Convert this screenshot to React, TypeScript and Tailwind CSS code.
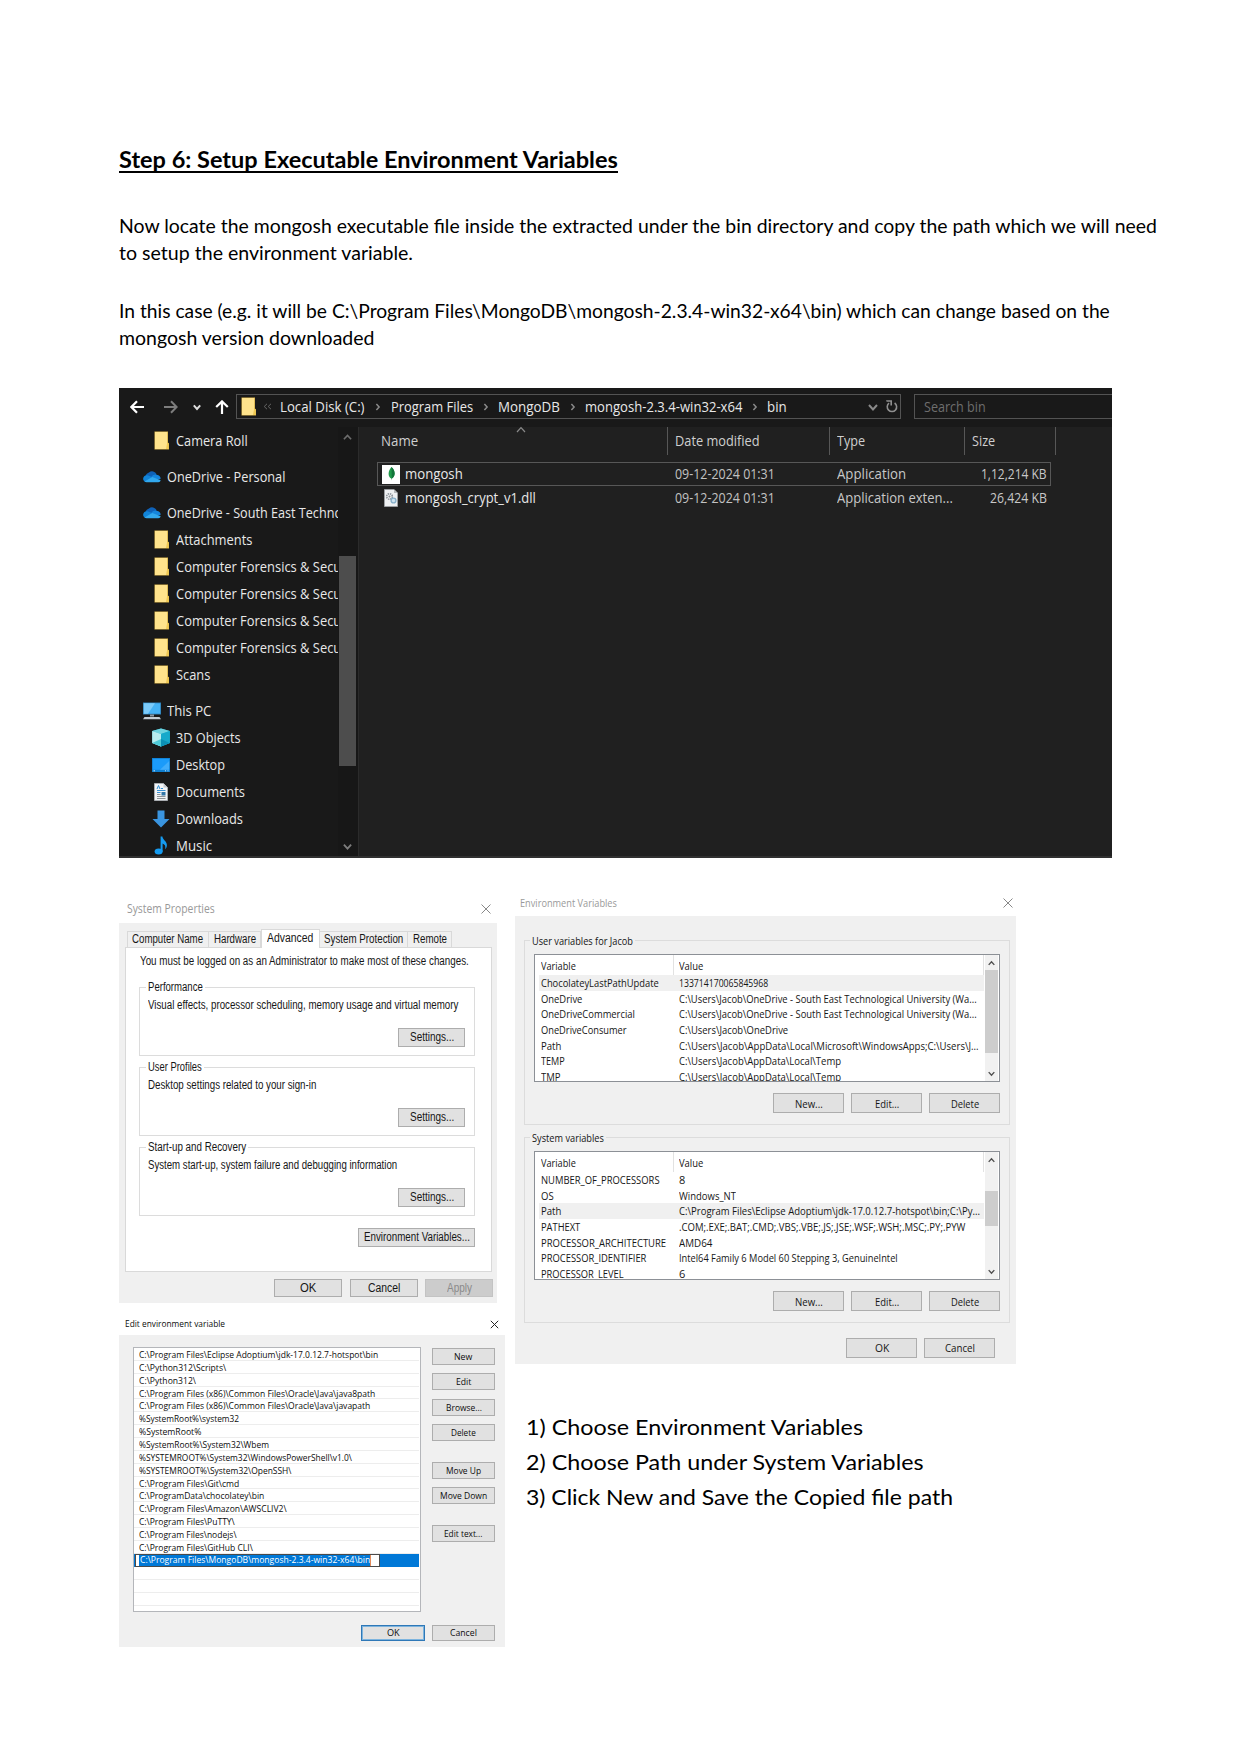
import { useLayoutEffect, useRef, useState, type ReactNode } from "react";

/** Single line of text, condensed or expanded horizontally to a given measure. */
function T({ w, children, className = "" }: { w: number; children: string; className?: string }) {
  const ref = useRef<HTMLSpanElement>(null);
  const [scale, setScale] = useState(1);
  useLayoutEffect(() => {
    if (ref.current) setScale(w / ref.current.offsetWidth);
  }, [w, children]);
  return (
    <span className={"inline-flex shrink-0 " + className} style={{ width: w }}>
      <span ref={ref} className="inline-block origin-left whitespace-pre" style={{ transform: `scaleX(${scale})` }}>
        {children}
      </span>
    </span>
  );
}

/* ---------- icons ---------- */

function Folder() {
  return (
    <svg width="15" height="19" viewBox="0 0 15 19" className="shrink-0">
      <path d="M0.5 0.5H14V11.5L15 12.5V18.5H0.5Z" fill="#d9b44a" />
      <path d="M1 1H13.2V18H1Z" fill="#ffe38c" />
      <path d="M13.2 11.5L14.8 12.5V18H12Z" fill="#f0c954" />
    </svg>
  );
}

function Cloud() {
  return (
    <svg width="18" height="13" viewBox="0 0 18 13" className="shrink-0">
      <path d="M3 8A4.6 4.6 0 0 1 6 2.4A5 5 0 0 1 13.6 4.2L10 9Z" fill="#0f62b8" />
      <path d="M0.2 9.5A3.7 3.7 0 0 1 4.4 5.2L10.5 7.5L3 12A3 3 0 0 1 0.2 9.5Z" fill="#1184d8" />
      <path d="M8.5 6.8C10 4.4 12.5 3.8 14.6 5A4 4 0 0 1 17.6 9L12 10Z" fill="#1585dc" />
      <path d="M1.5 11.4L9.3 7L17.7 10.3A2.6 2.6 0 0 1 15.3 12.3H3.6A4 4 0 0 1 1.5 11.4Z" fill="#32a9ee" />
    </svg>
  );
}

function Monitor() {
  return (
    <svg width="18" height="18" viewBox="0 0 18 18" className="shrink-0">
      <path d="M0 0.5H18V12.5H0Z" fill="#2f7fb5" />
      <path d="M0.8 1.3H17.2V11.7H0.8Z" fill="#45b2f5" />
      <path d="M0.8 1.3H12L5 11.7H0.8Z" fill="#7ccbfa" />
      <path d="M7 12.5H11V14.5H7Z" fill="#8e9aa5" />
      <path d="M1.5 15H16.5L18 17.2H0Z" fill="#c3ccd4" />
    </svg>
  );
}

function Cube() {
  return (
    <svg width="18" height="19" viewBox="0 0 18 19" className="shrink-0">
      <path d="M9 0.5L17.8 3V15L9 18.5L0.2 15V3Z" fill="#1fb6cf" />
      <path d="M9 0.5L17.8 3L9 6L0.2 3Z" fill="#6fd3df" />
      <path d="M0.2 3L9 6V18.5L0.2 15Z" fill="#b9edf0" />
      <path d="M0.2 15L9 11V18.5Z" fill="#4fcbd8" />
      <path d="M9 6L17.8 3V15L9 18.5Z" fill="#17a9cb" />
      <path d="M9 11L17.8 15L9 18.5Z" fill="#0c91b5" />
    </svg>
  );
}

function DesktopIcon() {
  return (
    <svg width="18" height="14" viewBox="0 0 18 14" className="shrink-0">
      <path d="M0 0H18V14H0Z" fill="#0f7fd0" />
      <path d="M0.8 0.8H17.2V11.8H0.8Z" fill="#1b9bfa" />
      <path d="M17.2 3V11.8H8Z" fill="#41adfb" />
      <path d="M1.5 12.8H3M13 12.8H14M15.5 12.8H16.5" stroke="#d6ecff" strokeWidth="0.9" />
    </svg>
  );
}

function DocIcon() {
  return (
    <svg width="14" height="18" viewBox="0 0 14 18" className="shrink-0">
      <path d="M0.5 0.5H9.5L13.5 4.5V17.5H0.5Z" fill="#f2f4f6" stroke="#a9adb1" />
      <path d="M9.5 0.5V4.5H13.5Z" fill="#c4c8cc" />
      <path d="M3 6L4.5 2.5L6 6M7 5.5H9" stroke="#2f8fd6" fill="none" />
      <path d="M3 7.5H11.5M3 9.5H6.5" stroke="#3a92d4" />
      <path d="M7.5 9H11.5V12.5H7.5Z" fill="#3277a8" />
      <path d="M3 11.5H6.5M3 13.5H11.5M3 15.5H11.5" stroke="#8d9499" />
    </svg>
  );
}

function DownIcon() {
  return (
    <svg width="18" height="18" viewBox="0 0 18 18" className="shrink-0">
      <path d="M5.5 0.5H12.5V9H17.5L9 17.5L0.5 9H5.5Z" fill="#3a95e0" />
    </svg>
  );
}

function MusicIcon() {
  return (
    <svg width="14" height="19" viewBox="0 0 14 19" className="shrink-0">
      <ellipse cx="4.6" cy="15.6" rx="4" ry="3" fill="#159bf0" />
      <path d="M6.6 0.5H8.4C8.8 4 13 5.2 12.9 9.2C12.9 11 12 12.5 11 13.3C12 10 11 8.4 8.6 7.4V15.8H6.6Z" fill="#159bf0" />
    </svg>
  );
}

function MongoIcon() {
  return (
    <svg width="18" height="19" viewBox="0 0 18 19" className="shrink-0">
      <path d="M0 0H18V19H0Z" fill="#fff" />
      <path d="M9.4 2C11.6 4 12.6 6 12.6 8.6C12.6 11 11.4 12.6 9.8 13.6L9.5 15.5L9.2 13.6C7.4 12.6 6.6 11 6.6 8.8C6.6 6 8 4 9.4 2Z" fill="#1f9a4a" />
      <path d="M9.5 2C11.6 4 12.6 6 12.6 8.6C12.6 11 11.4 12.6 9.8 13.6Z" fill="#12753a" />
    </svg>
  );
}

function DllIcon() {
  return (
    <svg width="14" height="18" viewBox="0 0 14 18" className="shrink-0">
      <path d="M0.5 0.5H10L13.5 4V17.5H0.5Z" fill="#eef0f2" stroke="#9c9fa2" />
      <path d="M10 0.5V4H13.5Z" fill="#b5b9bc" />
      <circle cx="5.5" cy="7.5" r="2.8" fill="none" stroke="#8b9299" strokeWidth="1.6" strokeDasharray="1.4 0.8" />
      <circle cx="5.5" cy="7.5" r="1" fill="#8b9299" />
      <circle cx="9.5" cy="11.5" r="2.4" fill="#cfe3f0" stroke="#88b0ca" strokeWidth="1.4" />
    </svg>
  );
}

function Chevron({ d, size = 8, color, stroke = 1.5 }: { d: "r" | "d" | "u"; size?: number; color: string; stroke?: number }) {
  const path = { r: "M3 1.2L6.4 5L3 8.8", d: "M1 3L5 7.4L9 3", u: "M1 7L5 2.6L9 7" }[d];
  return (
    <svg width={size} height={size} viewBox="0 0 10 10" className="shrink-0" fill="none" stroke={color} strokeWidth={(stroke * 10) / size}>
      <path d={path} />
    </svg>
  );
}

function Close({ color }: { color: string }) {
  return (
    <svg width="10" height="10" viewBox="0 0 10 10" className="shrink-0" stroke={color} strokeWidth="1">
      <path d="M0.5 0.5L9.5 9.5M9.5 0.5L0.5 9.5" />
    </svg>
  );
}

/* ---------- file explorer ---------- */

const tree: { icon: ReactNode; label: string; w: number; top?: boolean; gap?: boolean }[] = [
  { icon: <Folder />, label: "Camera Roll", w: 72 },
  { icon: <Cloud />, label: "OneDrive - Personal", w: 118, top: true, gap: true },
  { icon: <Cloud />, label: "OneDrive - South East Techno", w: 175, top: true, gap: true },
  { icon: <Folder />, label: "Attachments", w: 76.5 },
  { icon: <Folder />, label: "Computer Forensics & Secu", w: 165 },
  { icon: <Folder />, label: "Computer Forensics & Secu", w: 165 },
  { icon: <Folder />, label: "Computer Forensics & Secu", w: 165 },
  { icon: <Folder />, label: "Computer Forensics & Secu", w: 165 },
  { icon: <Folder />, label: "Scans", w: 34 },
  { icon: <Monitor />, label: "This PC", w: 44, top: true, gap: true },
  { icon: <Cube />, label: "3D Objects", w: 64.5 },
  { icon: <DesktopIcon />, label: "Desktop", w: 49 },
  { icon: <DocIcon />, label: "Documents", w: 69 },
  { icon: <DownIcon />, label: "Downloads", w: 67 },
  { icon: <MusicIcon />, label: "Music", w: 36 },
];

function Explorer() {
  return (
    <section className="flex h-[470px] w-[993px] flex-col border-b-2 border-[#303030] bg-[#191919] font-['Open_Sans',sans-serif] text-[14px] leading-[20px] text-[#e8e8e8]">
      <div className="flex h-[39px] shrink-0 items-start pt-[6px]">
        <div className="flex h-[25px] w-[117px] items-center">
          <svg width="14" height="14" viewBox="0 0 14 14" className="ml-[11px]" fill="none" stroke="#fff" strokeWidth="2.2">
            <path d="M14 7H1.5M7 1.2L1.4 7L7 12.8" />
          </svg>
          <svg width="14" height="14" viewBox="0 0 14 14" className="ml-[20px]" fill="none" stroke="#7d7d7d" strokeWidth="2">
            <path d="M0 7H12.5M7 1.2L12.6 7L7 12.8" />
          </svg>
          <div className="ml-[15px]"><Chevron d="d" size={8} color="#ddd" stroke={2} /></div>
          <svg width="14" height="14" viewBox="0 0 14 14" className="ml-[14px]" fill="none" stroke="#fff" strokeWidth="2.2">
            <path d="M7 14V1.5M1.2 7L7 1.4L12.8 7" />
          </svg>
        </div>
        <div className="flex h-[25px] w-[665px] items-center border border-[#535353] pl-[4px]">
          <Folder />
          <div className="ml-[7px] flex w-[9px]">
            <svg width="9" height="7" viewBox="0 0 9 7" fill="none" stroke="#666" strokeWidth="1">
              <path d="M4 0.8L1.2 3.5L4 6.2M8 0.8L5.2 3.5L8 6.2" />
            </svg>
          </div>
          <T w={85} className="ml-[8px]">Local Disk (C:)</T>
          <div className="flex w-[26px] justify-center"><Chevron d="r" color="#8a8a8a" /></div>
          <T w={82}>Program Files</T>
          <div className="flex w-[25px] justify-center"><Chevron d="r" color="#8a8a8a" /></div>
          <T w={62}>MongoDB</T>
          <div className="flex w-[25px] justify-center"><Chevron d="r" color="#8a8a8a" /></div>
          <T w={157}>mongosh-2.3.4-win32-x64</T>
          <div className="flex w-[25px] justify-center"><Chevron d="r" color="#8a8a8a" /></div>
          <T w={20}>bin</T>
          <div className="ml-auto flex items-center pr-[2px]">
            <Chevron d="d" size={10} color="#8a8a8a" stroke={2} />
            <svg width="12" height="13" viewBox="0 0 12 13" className="ml-[8px]" fill="none" stroke="#8f8f8f" strokeWidth="1.6">
              <path d="M3 3.2A4.7 4.7 0 1 0 8.6 3M1 1.5V1H5.2V5.4" />
            </svg>
          </div>
        </div>
        <div className="ml-[13px] flex h-[25px] flex-1 items-center border border-r-0 border-[#535353] pl-[9px] text-[#6e6e6e]">
          <T w={62}>Search bin</T>
        </div>
      </div>

      <div className="flex min-h-0 flex-1">
        <nav className="flex w-[219px] flex-col overflow-hidden">
          {tree.map((n, i) => (
            <div key={i} className={"flex h-[27px] shrink-0 items-center " + (n.gap ? "mt-[9px] " : "") + (n.top ? "pl-[24px]" : "pl-[33px]")}>
              <span className="flex w-[18px] shrink-0 justify-center">{n.icon}</span>
              <T w={n.w} className="ml-[6px]">{n.label}</T>
            </div>
          ))}
        </nav>
        <div className="flex w-[21px] flex-col items-start border-r border-[#2b2b2b] bg-[#171717]">
          <div className="flex h-[129px] pl-[5px] pt-[6px]"><Chevron d="u" size={9} color="#6d6d6d" stroke={1.6} /></div>
          <div className="ml-px h-[210px] w-[17px] bg-[#4d4d4d]" />
          <div className="mt-auto pb-[5px] pl-[5px]"><Chevron d="d" size={9} color="#7d7d7d" stroke={1.8} /></div>
        </div>

        <div className="flex flex-1 flex-col bg-[#202020]">
          <div className="flex h-[28px] items-center text-[#cfcfcf]">
            <div className="relative flex h-full w-[309px] items-center border-r border-[#575757] pl-[22px]">
              <T w={37}>Name</T>
              <div className="absolute left-[157px] top-[-2px]"><Chevron d="u" size={10} color="#8a8a8a" stroke={1.2} /></div>
            </div>
            <div className="flex h-full w-[162px] items-center border-r border-[#575757] pl-[7px]"><T w={85}>Date modified</T></div>
            <div className="flex h-full w-[135px] items-center border-r border-[#575757] pl-[7px]"><T w={28}>Type</T></div>
            <div className="flex h-full w-[91px] items-center border-r border-[#575757] pl-[7px]"><T w={23.5}>Size</T></div>
          </div>
          <div className="ml-[18px] mt-[7px] flex h-[24px] w-[674px] items-center border border-[#575757]">
            <span className="ml-[4px] flex w-[18px] justify-center"><MongoIcon /></span>
            <T w={57.5} className="ml-[5px]">mongosh</T>
            <T w={99.5} className="ml-[212px] text-[#c2c2c2]">09-12-2024 01:31</T>
            <T w={69} className="ml-[63px] text-[#c8c8c8]">Application</T>
            <T w={66} className="ml-auto mr-[3px] text-[#c8c8c8]">1,12,214 KB</T>
          </div>
          <div className="ml-[18px] mt-px flex h-[22px] w-[674px] items-center border-x border-transparent">
            <span className="ml-[4px] flex w-[18px] justify-center"><DllIcon /></span>
            <T w={131} className="ml-[5px]">mongosh_crypt_v1.dll</T>
            <T w={99.5} className="ml-[138.5px] text-[#c2c2c2]">09-12-2024 01:31</T>
            <T w={115.5} className="ml-[63px] text-[#c8c8c8]">Application exten...</T>
            <T w={57} className="ml-auto mr-[3px] text-[#c8c8c8]">26,424 KB</T>
          </div>
        </div>
      </div>
    </section>
  );
}

/* ---------- dialogs ---------- */

function Btn({ label, w, className }: { label: string; w: number; className: string }) {
  return (
    <button className={"flex shrink-0 items-center justify-center " + className}>
      <T w={w}>{label}</T>
    </button>
  );
}

const btn = "border border-[#adadad] bg-[#e1e1e1] ";

function SysGroup({ legend, lw, text, tw, className }: { legend: string; lw: number; text: string; tw: number; className: string }) {
  return (
    <div className={"relative ml-[13px] flex h-[69px] w-[336px] flex-col border border-[#dcdcdc] " + className}>
      <div className="absolute left-[6px] top-[-9px] flex h-[16px] items-center bg-white px-[2px]"><T w={lw}>{legend}</T></div>
      <div className="ml-[8px] mt-[9px] flex h-[16px] items-center"><T w={tw}>{text}</T></div>
      <div className="mr-[9px] mt-[15px] flex justify-end"><Btn label="Settings..." w={44} className={btn + "h-[19px] w-[67px] pb-[2px]"} /></div>
    </div>
  );
}

function SystemProperties() {
  const tab = "flex h-[16px] items-center justify-center border border-b-0 border-[#d9d9d9] pb-px ";
  return (
    <section className="flex h-[407px] w-[378px] flex-col font-['Liberation_Sans',sans-serif] text-[12px] leading-[16px] text-[#161616]">
      <header className="flex h-[27px] shrink-0 items-center justify-between pb-px pl-[8px] pr-[6px] font-['Open_Sans',sans-serif] text-[12px] text-[#999]">
        <T w={88}>System Properties</T>
        <Close color="#888" />
      </header>
      <div className="flex flex-1 flex-col bg-[#f0f0f0] pl-[6px] pt-[6px]">
        <div className="flex h-[18px] items-end pl-[2px]">
          <div className={tab + "w-[82px] pr-[2px]"}><T w={71}>Computer Name</T></div>
          <div className={tab + "w-[52px] border-l-0"}><T w={42}>Hardware</T></div>
          <div className="z-10 mb-[-1px] flex h-[19px] w-[59px] items-center justify-center border-x border-t border-[#d9d9d9] bg-white pb-[3px] pr-px"><T w={46}>Advanced</T></div>
          <div className={tab + "w-[88px] border-l-0"}><T w={79}>System Protection</T></div>
          <div className={tab + "w-[44px] border-l-0"}><T w={34}>Remote</T></div>
        </div>
        <div className="flex h-[325px] w-[367px] flex-col border border-[#d9d9d9] bg-white">
          <div className="ml-[14px] mt-[5px] flex h-[16px] items-center"><T w={329}>You must be logged on as an Administrator to make most of these changes.</T></div>
          <SysGroup className="mt-[18px]" legend="Performance" lw={55} text="Visual effects, processor scheduling, memory usage and virtual memory" tw={310} />
          <SysGroup className="mt-[11px]" legend="User Profiles" lw={54} text="Desktop settings related to your sign-in" tw={168} />
          <SysGroup className="mt-[11px]" legend="Start-up and Recovery" lw={98} text="System start-up, system failure and debugging information" tw={249} />
          <div className="mr-[16px] mt-[12px] flex justify-end"><Btn label="Environment Variables..." w={106} className={btn + "h-[19px] w-[117px] pb-[2px]"} /></div>
        </div>
        <div className="mt-[7px] flex gap-[7.5px] pl-[149px]">
          <Btn label="OK" w={16} className={btn + "h-[18px] w-[68px]"} />
          <Btn label="Cancel" w={32} className={btn + "h-[18px] w-[68px]"} />
          <Btn label="Apply" w={25} className="h-[18px] w-[68px] border border-[#c3c3c3] bg-[#cccccc] text-[#8a8a8a]" />
        </div>
      </div>
    </section>
  );
}

type VarRow = [string, number, string, number];

const userVars: VarRow[] = [
  ["ChocolateyLastPathUpdate", 118, "133714170065845968", 89],
  ["OneDrive", 41, "C:\\Users\\Jacob\\OneDrive - South East Technological University (Wa...", 298],
  ["OneDriveCommercial", 94, "C:\\Users\\Jacob\\OneDrive - South East Technological University (Wa...", 298],
  ["OneDriveConsumer", 86, "C:\\Users\\Jacob\\OneDrive", 109],
  ["Path", 20, "C:\\Users\\Jacob\\AppData\\Local\\Microsoft\\WindowsApps;C:\\Users\\J...", 300],
  ["TEMP", 24, "C:\\Users\\Jacob\\AppData\\Local\\Temp", 162],
  ["TMP", 20, "C:\\Users\\Jacob\\AppData\\Local\\Temp", 162],
];

const systemVars: VarRow[] = [
  ["NUMBER_OF_PROCESSORS", 119, "8", 6],
  ["OS", 13, "Windows_NT", 57],
  ["Path", 20, "C:\\Program Files\\Eclipse Adoptium\\jdk-17.0.12.7-hotspot\\bin;C:\\Py...", 301],
  ["PATHEXT", 39, ".COM;.EXE;.BAT;.CMD;.VBS;.VBE;.JS;.JSE;.WSF;.WSH;.MSC;.PY;.PYW", 286],
  ["PROCESSOR_ARCHITECTURE", 125, "AMD64", 33],
  ["PROCESSOR_IDENTIFIER", 105, "Intel64 Family 6 Model 60 Stepping 3, GenuineIntel", 219],
  ["PROCESSOR_LEVEL", 83, "6", 6],
];

function VarGroup({ legend, lw, rows, selected, height, listHeight, thumb }: { legend: string; lw: number; rows: VarRow[]; selected: number; height: string; listHeight: string; thumb: string }) {
  return (
    <div className={"relative ml-[9px] flex w-[486px] flex-col border border-[#dcdcdc] pl-[9px] pt-[13px] " + height}>
      <div className="absolute left-[5px] top-[-9px] flex h-[17px] items-center bg-[#f0f0f0] px-[2px]"><T w={lw}>{legend}</T></div>
      <div className={"flex w-[466px] overflow-hidden border border-[#8c9096] bg-white " + listHeight}>
        <div className="flex min-w-0 flex-1 flex-col pl-[4px]">
          <div className="flex h-[20px] shrink-0 items-center">
            <div className="flex h-full w-[135px] items-center border-r border-[#e2e2e2] pl-[2px]"><T w={35}>Variable</T></div>
            <div className="flex h-full flex-1 items-center border-r border-[#e2e2e2] pl-[5px]"><T w={24}>Value</T></div>
          </div>
          {rows.map((r, i) => (
            <div key={i} className={"flex h-[15.6px] shrink-0 items-center pl-[2px] " + (i === selected ? "bg-[#f0f0f0]" : "")}>
              <span className="flex w-[138px] shrink-0"><T w={r[1]}>{r[0]}</T></span>
              <T w={r[3]}>{r[2]}</T>
            </div>
          ))}
        </div>
        <div className="ml-px mr-px flex w-[13px] flex-col items-center bg-[#f1f1f1]">
          <div className="pt-[5px]"><Chevron d="u" size={7} color="#505050" stroke={1.4} /></div>
          <div className={"w-full bg-[#cdcdcd] " + thumb} />
          <div className="mt-auto pb-[4px]"><Chevron d="d" size={7} color="#505050" stroke={1.4} /></div>
        </div>
      </div>
      <div className="mt-[11px] flex justify-end gap-[7px] pr-[9px]">
        <Btn label="New..." w={28} className={btn + "h-[20px] w-[71px]"} />
        <Btn label="Edit..." w={24} className={btn + "h-[20px] w-[71px]"} />
        <Btn label="Delete" w={28} className={btn + "h-[20px] w-[71px]"} />
      </div>
    </div>
  );
}

function EnvironmentVariables() {
  return (
    <section className="flex h-[472px] w-[501px] flex-col font-['Open_Sans',sans-serif] text-[11px] leading-[15px] text-[#161616]">
      <header className="flex h-[24px] shrink-0 items-center justify-between pb-[3px] pl-[5px] pr-[3px] text-[#9a9a9a]">
        <T w={97}>Environment Variables</T>
        <Close color="#888" />
      </header>
      <div className="flex flex-1 flex-col bg-[#f0f0f0] pt-[24px]">
        <VarGroup legend="User variables for Jacob" lw={101} rows={userVars} selected={0} height="h-[185px]" listHeight="h-[128px]" thumb="mt-[3px] h-[83px]" />
        <div className="h-[12px]" />
        <VarGroup legend="System variables" lw={72} rows={systemVars} selected={2} height="h-[186px]" listHeight="h-[129px]" thumb="mt-[27px] h-[35px]" />
        <div className="mt-[15px] flex justify-end gap-[7px] pr-[21px]">
          <Btn label="OK" w={14} className={btn + "h-[20px] w-[71px] pb-px"} />
          <Btn label="Cancel" w={30} className={btn + "h-[20px] w-[71px] pb-px"} />
        </div>
      </div>
    </section>
  );
}

const paths: [string, number][] = [
  ["C:\\Program Files\\Eclipse Adoptium\\jdk-17.0.12.7-hotspot\\bin", 239],
  ["C:\\Python312\\Scripts\\", 87],
  ["C:\\Python312\\", 57],
  ["C:\\Program Files (x86)\\Common Files\\Oracle\\Java\\java8path", 236],
  ["C:\\Program Files (x86)\\Common Files\\Oracle\\Java\\javapath", 231.5],
  ["%SystemRoot%\\system32", 100],
  ["%SystemRoot%", 62],
  ["%SystemRoot%\\System32\\Wbem", 130],
  ["%SYSTEMROOT%\\System32\\WindowsPowerShell\\v1.0\\", 213],
  ["%SYSTEMROOT%\\System32\\OpenSSH\\", 152],
  ["C:\\Program Files\\Git\\cmd", 100],
  ["C:\\ProgramData\\chocolatey\\bin", 125.5],
  ["C:\\Program Files\\Amazon\\AWSCLIV2\\", 148],
  ["C:\\Program Files\\PuTTY\\", 96],
  ["C:\\Program Files\\nodejs\\", 97.5],
  ["C:\\Program Files\\GitHub CLI\\", 114],
];

function EditVariable() {
  const b = btn + "h-[17px] w-[63px] ";
  return (
    <section className="flex h-[334px] w-[386px] flex-col font-['Open_Sans',sans-serif] text-[9.5px] leading-[12px] text-[#0c0c0c]">
      <header className="flex h-[22px] shrink-0 items-center justify-between pl-[6px] pr-[6px]">
        <T w={100}>Edit environment variable</T>
        <svg width="9" height="9" viewBox="0 0 9 9" stroke="#222" strokeWidth="1"><path d="M0.8 0.8L8.2 8.2M8.2 0.8L0.8 8.2" /></svg>
      </header>
      <div className="flex flex-1 flex-col bg-[#f0f0f0] pl-[14px] pt-[12px]">
        <div className="flex h-[265px]">
          <div className="flex w-[288px] flex-col overflow-hidden border border-[#b4b6ba] bg-white">
            {paths.map(([p, w]) => (
              <div key={p} className="mr-px flex h-[12.87px] shrink-0 items-center border-b border-[#ededed] pl-[5px] pt-[2px]"><T w={w}>{p}</T></div>
            ))}
            <div className="mr-px flex h-[13px] shrink-0 items-center bg-[#0078d7] pl-[1px]">
              <div className="flex h-[13px] w-[245px] items-center border border-[#4a4a4a] bg-white pl-[3px]">
                <div className="flex h-[11px] items-center border-r border-[#e08a5a] bg-[#0078d7] pl-px text-white"><T w={230}>{"C:\\Program Files\\MongoDB\\mongosh-2.3.4-win32-x64\\bin"}</T></div>
              </div>
            </div>
            {[0, 1, 2].map((i) => <div key={i} className="mr-px h-[13px] shrink-0 border-b border-[#ededed]" />)}
          </div>
          <div className="ml-[11px] flex flex-col pt-px">
            <Btn label="New" w={18.5} className={b} />
            <Btn label="Edit" w={15.5} className={b + "mt-[8px]"} />
            <Btn label="Browse..." w={35.5} className={b + "mt-[9px]"} />
            <Btn label="Delete" w={25} className={b + "mt-[8px]"} />
            <Btn label="Move Up" w={35.5} className={b + "mt-[21px]"} />
            <Btn label="Move Down" w={47.5} className={b + "mt-[8px]"} />
            <Btn label="Edit text..." w={38.5} className={b + "mt-[21px]"} />
          </div>
        </div>
        <div className="mt-[13px] flex gap-[7px] pl-[228px]">
          <Btn label="OK" w={12.5} className="h-[16px] w-[64px] border-[1.5px] border-[#2f78b7] bg-[#e1e1e1] ring-1 ring-inset ring-[#7db4de]" />
          <Btn label="Cancel" w={26.5} className={btn + "h-[16px] w-[63px]"} />
        </div>
      </div>
    </section>
  );
}

export default function App() {
  return (
    <main className="flex h-[1755px] w-[1241px] flex-col overflow-hidden bg-white pl-[119px] font-['Lato',sans-serif] text-black">
      <h1 className="mt-[146px] flex h-[30px] shrink-0 items-center text-[22px] font-bold leading-[30px]">
        <span className="flex h-[24px] items-center border-b-2 border-black"><T w={499}>Step 6: Setup Executable Environment Variables</T></span>
      </h1>
      <p className="mt-[37px] flex h-[53px] shrink-0 flex-col text-[18.5px] leading-[26.5px]">
        <T w={1038}>Now locate the mongosh executable file inside the extracted under the bin directory and copy the path which we will need</T>
        <T w={294}>to setup the environment variable.</T>
      </p>
      <p className="mt-[32px] flex h-[53px] shrink-0 flex-col text-[18.5px] leading-[26.5px]">
        <T w={991}>{"In this case (e.g. it will be C:\\Program Files\\MongoDB\\mongosh-2.3.4-win32-x64\\bin) which can change based on the"}</T>
        <T w={255}>mongosh version downloaded</T>
      </p>
      <div className="mt-[37px] shrink-0"><Explorer /></div>
      <div className="flex items-start">
        <div className="mt-[38px] flex w-[396px] flex-col">
          <SystemProperties />
          <div className="mt-[10px]"><EditVariable /></div>
        </div>
        <div className="mt-[34px] flex flex-col">
          <EnvironmentVariables />
          <div className="ml-[11px] mt-[45px] flex flex-col text-[22px] leading-[35px]">
            <T w={337}>1) Choose Environment Variables</T>
            <T w={398}>2) Choose Path under System Variables</T>
            <T w={427}>3) Click New and Save the Copied file path</T>
          </div>
        </div>
      </div>
    </main>
  );
}
